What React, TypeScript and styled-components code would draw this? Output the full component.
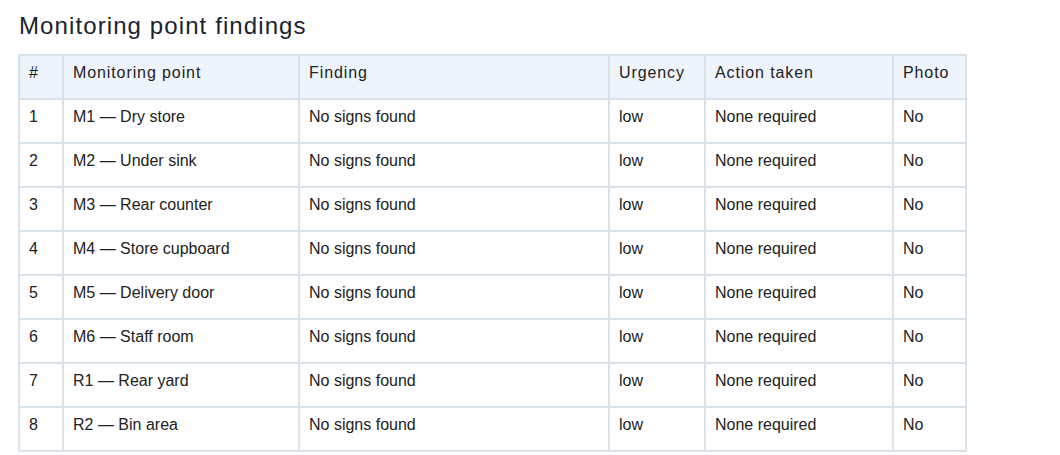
import styled, { createGlobalStyle } from "styled-components";

const GlobalStyle = createGlobalStyle`
  body {
    margin: 0;
    background: #ffffff;
    font-family: "Liberation Sans", Arial, Helvetica, sans-serif;
    color: #222222;
  }
`;

const Page = styled.main`
  padding: 12px 18px;
`;

const Title = styled.h2`
  margin: 0 0 14px 1px;
  font-size: 24px;
  font-weight: 400;
  line-height: 28px;
  letter-spacing: 1.1px;
  color: #1b2230;
`;

const Table = styled.table`
  width: 947px;
  table-layout: fixed;
  border-collapse: collapse;
  font-size: 16px;
`;

const HeadCell = styled.th<{ w: number }>`
  width: ${(p) => p.w}px;
  height: 44px;
  box-sizing: border-box;
  padding: 7px 9px 15px;
  line-height: 20px;
  text-align: left;
  font-weight: 400;
  letter-spacing: 0.9px;
  vertical-align: top;
  background: #eef4fc;
  border: 2px solid #d9e1eb;
  color: #222222;
`;

const Cell = styled.td`
  height: 44px;
  box-sizing: border-box;
  padding: 7px 9px 15px;
  line-height: 20px;
  vertical-align: top;
  border: 2px solid #d9e1eb;
  color: #222222;
`;

const columns = [
  { label: "#", w: 44 },
  { label: "Monitoring point", w: 236 },
  { label: "Finding", w: 310 },
  { label: "Urgency", w: 96 },
  { label: "Action taken", w: 188 },
  { label: "Photo", w: 73 },
];

const points = [
  "M1 — Dry store",
  "M2 — Under sink",
  "M3 — Rear counter",
  "M4 — Store cupboard",
  "M5 — Delivery door",
  "M6 — Staff room",
  "R1 — Rear yard",
  "R2 — Bin area",
];

export default function App() {
  return (
    <Page>
      <GlobalStyle />
      <Title>Monitoring point findings</Title>
      <Table>
        <thead>
          <tr>
            {columns.map((c) => (
              <HeadCell key={c.label} w={c.w}>
                {c.label}
              </HeadCell>
            ))}
          </tr>
        </thead>
        <tbody>
          {points.map((point, i) => (
            <tr key={point}>
              <Cell>{i + 1}</Cell>
              <Cell>{point}</Cell>
              <Cell>No signs found</Cell>
              <Cell>low</Cell>
              <Cell>None required</Cell>
              <Cell>No</Cell>
            </tr>
          ))}
        </tbody>
      </Table>
    </Page>
  );
}
